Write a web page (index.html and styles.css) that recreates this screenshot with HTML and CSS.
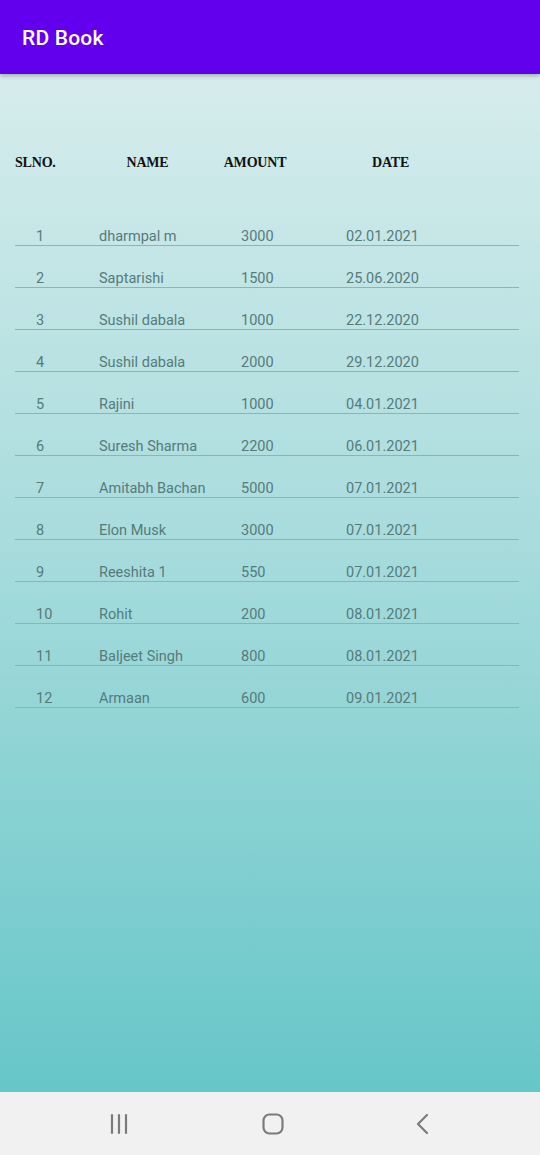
FILE: index.html
```html
<!DOCTYPE html>
<html>
<head>
<meta charset="utf-8">
<link rel="stylesheet" href="styles.css">
</head>
<body>
<div class="app">
  <header class="appbar"><span class="title">RD Book</span></header>
  <main class="content">
    <div class="thead">
      <div class="th th-sl">SLNO.</div>
      <div class="th">NAME</div>
      <div class="th">AMOUNT</div>
      <div class="th">DATE</div>
    </div>
    <div class="rows">
      <div class="row"><span>1</span><span>dharmpal m</span><span>3000</span><span>02.01.2021</span></div>
      <div class="row"><span>2</span><span>Saptarishi</span><span>1500</span><span>25.06.2020</span></div>
      <div class="row"><span>3</span><span>Sushil dabala</span><span>1000</span><span>22.12.2020</span></div>
      <div class="row"><span>4</span><span>Sushil dabala</span><span>2000</span><span>29.12.2020</span></div>
      <div class="row"><span>5</span><span>Rajini</span><span>1000</span><span>04.01.2021</span></div>
      <div class="row"><span>6</span><span>Suresh Sharma</span><span>2200</span><span>06.01.2021</span></div>
      <div class="row"><span>7</span><span>Amitabh Bachan</span><span>5000</span><span>07.01.2021</span></div>
      <div class="row"><span>8</span><span>Elon Musk</span><span>3000</span><span>07.01.2021</span></div>
      <div class="row"><span>9</span><span>Reeshita 1</span><span>550</span><span>07.01.2021</span></div>
      <div class="row"><span>10</span><span>Rohit</span><span>200</span><span>08.01.2021</span></div>
      <div class="row"><span>11</span><span>Baljeet Singh</span><span>800</span><span>08.01.2021</span></div>
      <div class="row"><span>12</span><span>Armaan</span><span>600</span><span>09.01.2021</span></div>
    </div>
  </main>
  <nav class="navbar">
    <svg class="nav-icon" width="20" height="22" viewBox="0 0 20 22"><g stroke="#7b7b7b" stroke-width="2.2" stroke-linecap="round"><line x1="3" y1="2" x2="3" y2="20"/><line x1="10" y1="2" x2="10" y2="20"/><line x1="17" y1="2" x2="17" y2="20"/></g></svg>
    <svg class="nav-icon" width="22" height="22" viewBox="0 0 22 22"><rect x="1.5" y="1.5" width="19" height="19" rx="6" fill="none" stroke="#7b7b7b" stroke-width="2.2"/></svg>
    <svg class="nav-icon" width="14" height="22" viewBox="0 0 14 22"><polyline points="11,2 2,11 11,20" fill="none" stroke="#7b7b7b" stroke-width="2.2" stroke-linecap="round" stroke-linejoin="round"/></svg>
  </nav>
</div>
</body>
</html>
```

FILE: styles.css
```css
* { box-sizing: border-box; }
html, body { margin: 0; padding: 0; }
body { width: 540px; height: 1155px; overflow: hidden; font-family: Roboto, "Liberation Sans", sans-serif; }
.app { display: flex; flex-direction: column; height: 1155px; }
.appbar {
  height: 74px; flex: none; background: #6200ee;
  display: flex; align-items: center; padding: 2px 0 0 22px;
  box-shadow: 0 2px 4px rgba(0,0,0,0.25); position: relative; z-index: 1;
}
.title { color: #ffffff; font-size: 21px; font-weight: 500; letter-spacing: 0.2px; }
.content {
  flex: 1; background: linear-gradient(to bottom, #d6ecec 0%, #a9dcdd 45%, #66c6c8 100%);
  padding: 79px 21px 0 15px;
}
.thead { display: grid; grid-template-columns: 85px 95px 120px 151px; height: 20px; align-items: center; margin-bottom: 31px; }
.th { font-family: "Liberation Serif", "Times New Roman", serif; font-weight: bold; font-size: 14px; color: #111; text-align: center; letter-spacing: -0.2px; }
.th-sl { text-align: left; }
.row {
  display: grid; grid-template-columns: 63px 142px 105px 1fr; align-items: end;
  height: 42px; padding: 0 0 0 21px; border-bottom: 1.5px solid #86b6b7;
  font-size: 14.5px; line-height: 16px; color: #557b7b;
}
.navbar {
  height: 63px; flex: none; background: #f1f1f1;
  display: flex; align-items: center; justify-content: space-between; padding: 0 110px 0 109px;
}
.nav-icon { display: block; }
```
